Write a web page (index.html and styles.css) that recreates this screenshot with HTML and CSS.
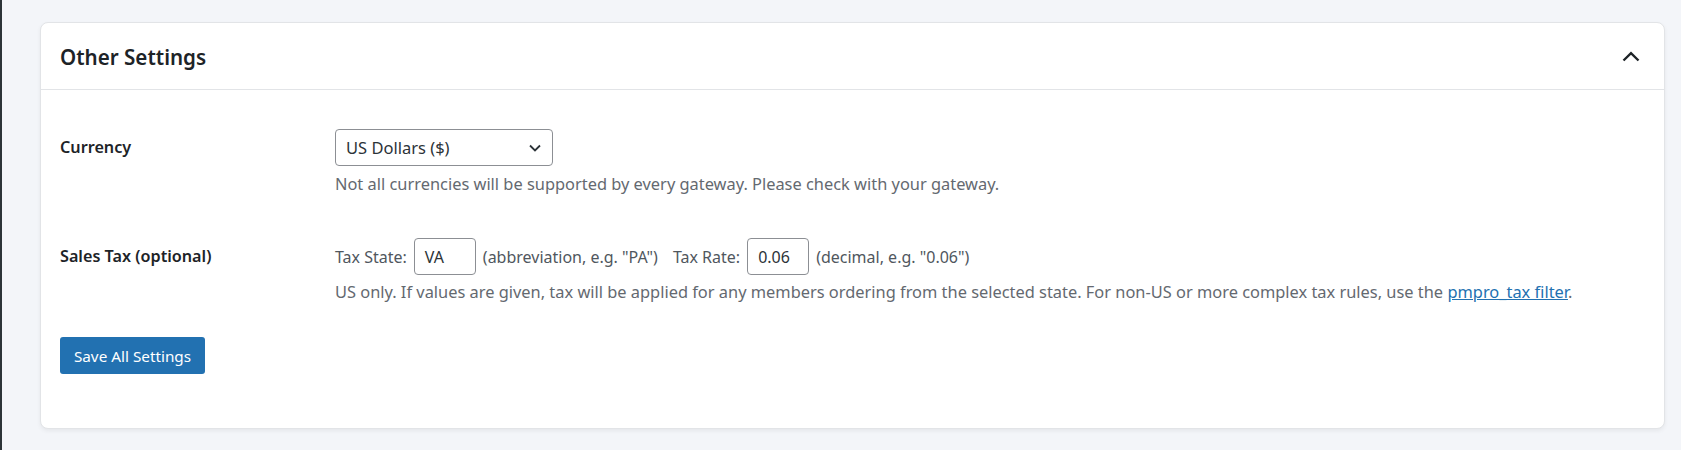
FILE: index.html
```html
<!DOCTYPE html>
<html>
<head>
<meta charset="utf-8">
<link rel="stylesheet" href="styles.css">
</head>
<body>
<div class="page">
  <div class="edge"></div>
  <main class="content">
    <section class="card">
      <header class="card-head">
        <h2 class="card-title">Other Settings</h2>
        <svg class="chev" width="18" height="11" viewBox="0 0 18 11"><path d="M1.5 9.5 L9 2.2 L16.5 9.5" fill="none" stroke="#1d2327" stroke-width="2.4"/></svg>
      </header>
      <div class="card-body">
        <div class="row">
          <div class="label">Currency</div>
          <div class="field">
            <div class="select">
              <span>US Dollars ($)</span>
              <svg width="12" height="8" viewBox="0 0 12 8"><path d="M1 1.5 L6 6.5 L11 1.5" fill="none" stroke="#2c3338" stroke-width="1.8"/></svg>
            </div>
            <p class="help help-1">Not all currencies will be supported by every gateway. Please check with your gateway.</p>
          </div>
        </div>
        <div class="row row-tax">
          <div class="label">Sales Tax (optional)</div>
          <div class="field">
            <div class="inline">
              <span>Tax State:</span>
              <span class="input">VA</span>
              <span>(abbreviation, e.g. "PA")</span>
              <span class="gap">Tax Rate:</span>
              <span class="input">0.06</span>
              <span>(decimal, e.g. "0.06")</span>
            </div>
            <p class="help help-2">US only. If values are given, tax will be applied for any members ordering from the selected state. For non-US or more complex tax rules, use the <a href="#">pmpro_tax filter</a>.</p>
          </div>
        </div>
        <button class="btn">Save All Settings</button>
      </div>
    </section>
  </main>
</div>
</body>
</html>
```

FILE: styles.css
```css
html, body {
  margin: 0;
  padding: 0;
  background: #f3f5f9;
  font-family: "Noto Sans", "Open Sans", sans-serif;
  color: #1d2327;
}
.page {
  display: flex;
  height: 450px;
}
.edge {
  width: 2px;
  background: #2c3338;
  flex: none;
}
.content {
  flex: 1;
  padding: 22px 16px 0 38px;
}
.card {
  background: #fff;
  border: 1px solid #e2e4e7;
  border-radius: 8px;
  box-shadow: 0 2px 4px rgba(0,0,0,0.06);
  height: 407px;
  box-sizing: border-box;
}
.card-head {
  display: flex;
  align-items: center;
  justify-content: space-between;
  height: 66px;
  padding: 0 24px 0 19px;
  border-bottom: 1px solid #e2e4e7;
}
.card-title {
  margin: 0;
  font-size: 20.6px;
  font-weight: 600;
  color: #1d2327;
  position: relative;
  top: 1px;
}
.card-body {
  padding: 39px 20px 0 19px;
}
.row {
  display: grid;
  grid-template-columns: 275px 1fr;
}
.row-tax {
  margin-top: 42px;
}
.label {
  font-size: 16.2px;
  font-weight: 600;
  line-height: 37px;
}
.field {
  font-size: 16px;
  color: #50575e;
}
.select {
  display: flex;
  align-items: center;
  justify-content: space-between;
  width: 218px;
  height: 37px;
  box-sizing: border-box;
  border: 1px solid #8c8f94;
  border-radius: 4px;
  padding: 0 11px 0 10px;
  color: #2c3338;
  font-size: 16.5px;
}
.help {
  margin: 0;
  font-size: 16.4px;
  color: #646970;
  line-height: 24px;
}
.help-1 { margin-top: 6px; }
.help-2 { margin-top: 5px; }
.help a {
  color: #2271b1;
}
.inline {
  display: flex;
  align-items: center;
  gap: 7px;
  height: 37px;
  color: #50575e;
}
.gap {
  margin-left: 8px;
}
.input {
  display: flex;
  align-items: center;
  width: 62px;
  height: 37px;
  box-sizing: border-box;
  border: 1px solid #8c8f94;
  border-radius: 4px;
  padding: 0 10px;
  color: #2c3338;
}
.btn {
  display: block;
  margin-top: 33px;
  background: #2271b1;
  color: #fff;
  border: 0;
  border-radius: 3px;
  height: 37px;
  width: 145px;
  font-family: inherit;
  font-size: 15.3px;
  padding: 0;
}
```
